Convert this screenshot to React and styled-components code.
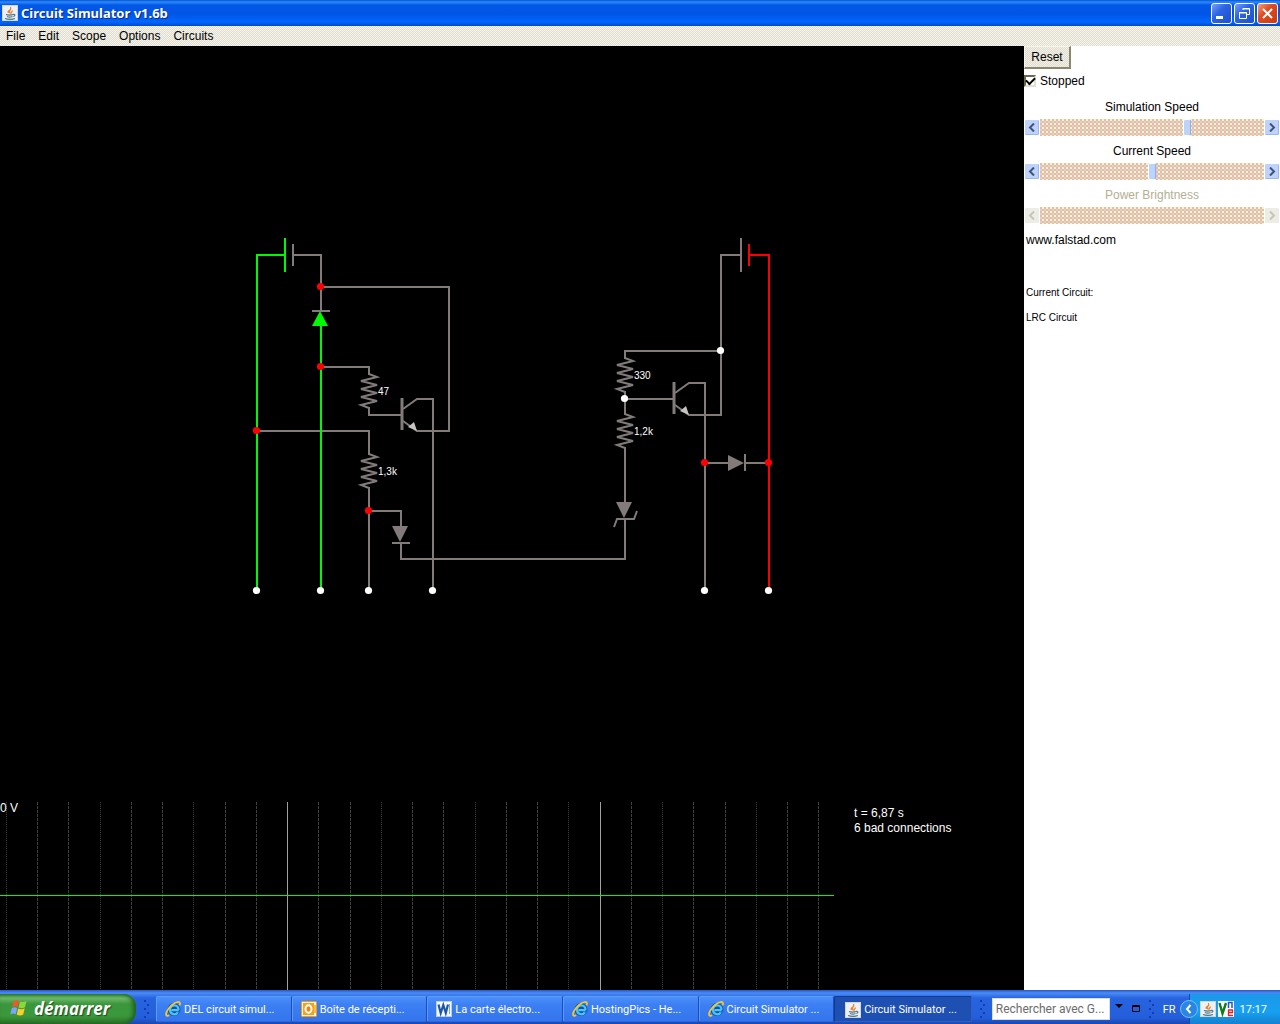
import React, { useState } from 'react'
import styled, { createGlobalStyle, css } from 'styled-components'

const WIRE = '#837a7a'
const GREEN = '#00f800'
const RED = '#ff0000'

const terminals = [256.5, 320.5, 368.5, 432.5, 704.5, 768.5]
const tasks = [
  { icon: 'ie', title: 'DEL circuit simul...' },
  { icon: 'outlook', title: 'Boîte de récepti...' },
  { icon: 'word', title: 'La carte électro...' },
  { icon: 'ie', title: 'HostingPics - He...' },
  { icon: 'ie', title: 'Circuit Simulator ...' },
  { icon: 'java', title: 'Circuit Simulator ...', active: true },
]

/* icons */
function JavaIcon() {
  return (
    <svg width="16" height="16" viewBox="0 0 16 16" aria-hidden="true">
      <rect width="16" height="16" rx="1" fill="#eef0f2" />
      <path d="M.5 15.5V.5h15v15z" fill="none" stroke="#cfd6dc" />
      <path d="M8.500 8.500C5 6 10 5 8.500 2M6.500 8C5 6 8 5.500 9 4M9.500 8.500c-1-1 1-2 1-3" fill="none" stroke="#e8802a" strokeWidth="1.200" />
      <path d="M4 9.500c1.500.7 5.500.7 7 0M5 11.500c1.500.6 4 .6 5.500 0M3 13.500c3 1 7 1 10 0M11 9.500c2.500-.4 2.500 1.500.3 2" fill="none" stroke="#4d7488" strokeWidth="1.200" />
    </svg>
  )
}

function IeIcon() {
  return (
    <svg width="16" height="16" viewBox="0 0 16 16" aria-hidden="true">
      <circle cx="9" cy="8.500" r="6.500" fill="#0c52a8" />
      <path d="M13.500 9.200H6.500M13.500 9.200C14 2.800 5 2.800 5 8.700c0 5.300 6.300 5.800 8 2.300" fill="none" stroke="#4cc4f8" strokeWidth="2.200" />
      <path d="M12.500 10.500h3.500v1.200h-3.500z" fill="#2c74ea" />
      <path d="M4.200 14.300C1.200 16 .2 13.800 2 10.200 4.200 5.700 9.500 1.200 13.200.9c2-.1 2.200 1.600 1.300 3.500" fill="none" stroke="#f7c52e" strokeWidth="1.800" />
    </svg>
  )
}

function OutlookIcon() {
  return (
    <svg width="16" height="16" viewBox="0 0 16 16" aria-hidden="true">
      <rect x=".5" y=".5" width="15" height="15" rx="1" fill="#fff3c4" stroke="#f39a1c" />
      <rect x="2" y="2" width="11" height="12" fill="#f6a11c" />
      <ellipse cx="7.500" cy="8" rx="3" ry="3.800" fill="#e88a10" stroke="#fff" strokeWidth="2" />
      <path d="M13 4h2v8h-2z" fill="#f9bf3d" />
    </svg>
  )
}

function WordIcon() {
  return (
    <svg width="16" height="16" viewBox="0 0 16 16" aria-hidden="true">
      <rect x=".5" y=".5" width="15" height="15" fill="#f4f8fd" stroke="#b9cde8" />
      <path d="M13.500 3v10" stroke="#7fa5d8" />
      <path d="M2.500 3.500 4.700 12 7.300 4l2.500 8L12 3.500" fill="none" stroke="#1d57a8" strokeWidth="2.200" />
    </svg>
  )
}

function WindowsFlag() {
  return (
    <svg width="18" height="18" viewBox="0 0 18 18" aria-hidden="true">
      <path d="M3.500 2.200C5.500.8 7 .9 9 1.900L7.500 8C5.700 7 4 7 2 8.200z" fill="#f0582a" />
      <path d="M10 2.400c2 1 4 1 6.500-.3L15 8.200c-2.300 1.300-4.300 1.200-6.500.2z" fill="#8ed63c" />
      <path d="M1.800 9.200C3.700 8 5.400 8 7.200 9l-1.500 6.200C4 14.200 2.200 14.100.2 15.400z" fill="#7ca4fc" />
      <path d="M8.200 9.400c2 1 4.200 1.100 6.500-.1l-1.500 6.300c-2.200 1.200-4.300 1.100-6.500 0z" fill="#f9cf2b" />
    </svg>
  )
}

const icons = { ie: IeIcon, outlook: OutlookIcon, word: WordIcon, java: JavaIcon }

/* circuit parts, drawn on the simulator grid */
function Resistor({ x, y, label }) {
  const teeth = [3, 7, 11, 15, 19, 23, 27, 31].map((dy, i) => `${x + (i % 2 ? -8 : 8)},${y + dy}`)
  return (
    <g>
      <polyline points={`${x},${y} ${teeth.join(' ')} ${x},${y + 34}`} fill="none" stroke={WIRE} strokeWidth="2" />
      <CircuitText x={x + 9} y={y + 21}>{label}</CircuitText>
    </g>
  )
}

function Transistor({ x, y }) {
  return (
    <g transform={`translate(${x} ${y})`}>
      <path d="M0-16V16" stroke={WIRE} strokeWidth="3" />
      <path d="M1-5 15-15H32M1 7 15 17H32" fill="none" stroke={WIRE} strokeWidth="2" />
      <path d="M15 17 6 13 12 8z" fill="#c4c4c4" />
    </g>
  )
}

function Circuit() {
  return (
    <Schematic viewBox="0 46 1024 756" role="img" aria-label="Circuit">
      <Wire d="M293 255H321V311M321 287H449V431H432M321 367H369V375M369 407V415H402M257 431H369V455M369 487V591M369 511H401V527M401 543V559H625V519M433 398V591" />
      <Wire d="M741 255H721V415H704M721 351H625V359M625 391V415M625 399H674M625 447V503M705 382V591M705 463H728M745 463H769" />
      <Wire d="M293 244V266M741 238V272M312 311H330M392 543H410M745 454V471M614 527 617 519H634L637 511" />
      <Resistor x={369} y={374} label="47" />
      <Resistor x={369} y={454} label="1,3k" />
      <Resistor x={625} y={358} label="330" />
      <Resistor x={625} y={414} label="1,2k" />
      <Transistor x={402} y={414} />
      <Transistor x={674} y={398} />
      <path d="M392 526h16l-8 16zM616 502h16l-8 16zM728 455v16l16-8z" fill={WIRE} />
      <Wire $color={GREEN} d="M285 238V272M285 255H257V591M321 325V591" />
      <path d="M320 311 312 326H328z" fill={GREEN} />
      <Wire $color={RED} d="M749 244V266M749 255H769V591" />
      {[[320.5, 286.5], [320.5, 366.5], [256.5, 430.5], [368.5, 510.5], [704.5, 462.5], [768.5, 462.5]].map(([x, y]) => (
        <circle key={`${x}-${y}`} cx={x} cy={y} r="3.6" fill={RED} />
      ))}
      {[[720.5, 350.5], [624.5, 398.5], ...terminals.map((x) => [x, 590.5])].map(([x, y]) => (
        <circle key={`${x}-${y}`} cx={x} cy={y} r="3.6" fill="#fff" />
      ))}
    </Schematic>
  )
}

function Scope() {
  const lines = Array.from({ length: 27 }, (_, i) => i)
  return (
    <ScopeRow>
      <Plot viewBox="0 0 834 188" preserveAspectRatio="none" role="img" aria-label="Scope">
        {lines.map((i) => {
          const x = Math.floor(6.3 + i * 31.25) + 0.5
          const major = i === 9 || i === 19
          return <path key={i} d={`M${x} 0V188`} stroke={major ? '#a0a0a0' : '#404040'} strokeDasharray={major ? 'none' : i % 3 ? '3 1' : '1 1'} />
        })}
        <path d="M0 93.500H834" stroke="#00f800" />
        <ScopeText x="0" y="10">0 V</ScopeText>
      </Plot>
      <Info>
        <div>t = 6,87 s</div>
        <div>6 bad connections</div>
      </Info>
    </ScopeRow>
  )
}

function Scrollbar({ id, label, start, disabled }) {
  const [value, setValue] = useState(start)
  const step = (n) => setValue(Math.max(0, Math.min(100, value + n)))
  return (
    <Field>
      <FieldLabel htmlFor={id} $disabled={disabled}>{label}</FieldLabel>
      <Bar>
        <Arrow type="button" aria-label={`${label} down`} disabled={disabled} onClick={() => step(-1)}>
          <svg width="8" height="9" viewBox="0 0 8 9"><path d="M6 .5 2 4.500 6 8.500" /></svg>
        </Arrow>
        <Range id={id} type="range" value={value} disabled={disabled} onChange={(e) => setValue(Number(e.target.value))} />
        <Arrow type="button" aria-label={`${label} up`} disabled={disabled} onClick={() => step(1)}>
          <svg width="8" height="9" viewBox="0 0 8 9"><path d="M2 .5 6 4.500 2 8.500" /></svg>
        </Arrow>
      </Bar>
    </Field>
  )
}

function App() {
  const [stopped, setStopped] = useState(true)

  return (
    <Desktop>
      <GlobalStyle />
      {/* title bar */}
      <TitleBar>
        <JavaIcon />
        <Title>Circuit Simulator v1.6b</Title>
        <WindowButton type="button" aria-label="Minimize">
          <svg width="19" height="19" viewBox="0 0 19 19"><path d="M4 13.500h7" strokeWidth="3" /></svg>
        </WindowButton>
        <WindowButton type="button" aria-label="Restore">
          <svg width="19" height="19" viewBox="0 0 19 19"><path d="M4.500 8.500h7v6h-7zM4 9h8M8 6V4.500h6.500v6H12M7.500 5H15" /></svg>
        </WindowButton>
        <WindowButton type="button" aria-label="Close" $close>
          <svg width="19" height="19" viewBox="0 0 19 19"><path d="M5 5 14 14M14 5 5 14" strokeWidth="2" /></svg>
        </WindowButton>
      </TitleBar>

      {/* menu */}
      <MenuBar>
        {['File', 'Edit', 'Scope', 'Options', 'Circuits'].map((name) => (
          <MenuItem type="button" key={name}>{name}</MenuItem>
        ))}
      </MenuBar>

      <Main>
        <Canvas>
          <Circuit />
          <Scope />
        </Canvas>
        {/* controls on the right */}
        <Side>
          <ResetButton type="button">Reset</ResetButton>
          <CheckLabel>
            <input type="checkbox" checked={stopped} onChange={() => setStopped(!stopped)} />
            Stopped
          </CheckLabel>
          <Scrollbar id="speed" label="Simulation Speed" start={66} />
          <Scrollbar id="current" label="Current Speed" start={50} />
          <Scrollbar id="power" label="Power Brightness" start={50} disabled />
          <SideText>www.falstad.com</SideText>
          <SmallText>
            <p>Current Circuit:</p>
            <p>LRC Circuit</p>
          </SmallText>
        </Side>
      </Main>

      {/* taskbar */}
      <Taskbar>
        <StartButton type="button"><WindowsFlag />démarrer</StartButton>
        <Grip />
        <Tasks>
          {tasks.map((task, i) => {
            const Icon = icons[task.icon]
            return <Task type="button" key={i} $active={task.active}><Icon /><span>{task.title}</span></Task>
          })}
        </Tasks>
        <Grip />
        <Search type="text" aria-label="Rechercher" placeholder="Rechercher avec G..." />
        <SearchTools>
          <svg width="26" height="12" viewBox="0 0 26 12" aria-hidden="true">
            <path d="M0 1h8L4 5z" fill="#000" />
            <path d="M17.500 2.500h7v6h-7zM17 3.500h8" fill="none" stroke="#000" />
          </svg>
        </SearchTools>
        <Grip />
        <Language>FR</Language>
        <Tray>
          <TrayArrow type="button" aria-label="Hidden icons">
            <svg width="18" height="18" viewBox="0 0 18 18">
              <circle cx="9" cy="9" r="8.500" fill="#2a86e4" stroke="#79bdf5" />
              <path d="M10.500 5 7 9l3.500 4" fill="none" stroke="#fff" strokeWidth="2" />
            </svg>
          </TrayArrow>
          <JavaIcon />
          <svg width="16" height="16" viewBox="0 0 16 16" aria-hidden="true">
            <path d="M0 0h16v16H0z" fill="#fff" />
            <path d="M1.500 2 4.500 12.500 8 2" fill="none" stroke="#0a7d1c" strokeWidth="2.400" />
            <path d="M10.500 7V1.500H14V7" fill="none" stroke="#1f4fe0" strokeWidth="1.500" />
            <path d="M15 9h-4.500v5.500H15M10 11.500h4.500V9" fill="none" stroke="#e0202a" strokeWidth="1.300" />
          </svg>
          <Clock>17:17</Clock>
        </Tray>
      </Taskbar>
    </Desktop>
  )
}

export default App

const GlobalStyle = createGlobalStyle`
  * {
    box-sizing: border-box;
  }
  body {
    margin: 0;
    background: #000;
    font-family: "Liberation Sans", Arial, sans-serif;
    font-size: 12px;
    color: #000;
  }
  button, input {
    font: inherit;
    color: inherit;
    margin: 0;
  }
  p {
    margin: 0;
  }
`

const Desktop = styled.div`
  display: flex;
  flex-direction: column;
  min-height: 100vh;
`

const TitleBar = styled.header`
  display: flex;
  align-items: center;
  gap: 2px;
  height: 26px;
  padding: 0 2px;
  background: linear-gradient(#0a4fd0 0, #2a8cff 2px, #0458e6 5px, #0055e5 14px, #0066ff 22px, #0048c8 26px);
`

const Title = styled.h1`
  flex: 1;
  margin: 0;
  padding-left: 1px;
  color: #fff;
  font-family: "Noto Sans", sans-serif;
  font-size: 13px;
  line-height: 20px;
  font-weight: 700;
  text-shadow: 1px 1px #0a2a80;
`

const WindowButton = styled.button`
  width: 21px;
  height: 21px;
  padding: 0;
  border: 1px solid #fff;
  border-radius: 3px;
  background: ${({ $close }) => ($close
    ? 'linear-gradient(135deg, #f0a080, #e04a20 40%, #c83c14)'
    : 'linear-gradient(135deg, #7aa0f8, #2c64e4 40%, #1c50d0)')};
  svg {
    display: block;
    fill: none;
    stroke: #fff;
  }
`

const MenuBar = styled.nav`
  display: flex;
  align-items: center;
  gap: 13px;
  height: 20px;
  padding: 0 6px;
  background: repeating-conic-gradient(#dedbd2 0 25%, #f8f6ea 0 50%) 0 0 / 2px 2px;
`

const MenuItem = styled.button`
  padding: 0;
  border: 0;
  background: none;
`

const Main = styled.main`
  flex: 1;
  display: grid;
  grid-template-columns: 4fr 1fr;
`

const Canvas = styled.section`
  display: flex;
  flex-direction: column;
  min-width: 0;
  background: #000;
  color: #fff;
`

const Schematic = styled.svg`
  display: block;
  flex: 1;
  width: 100%;
  min-height: 0;
`

const Wire = styled.path`
  fill: none;
  stroke: ${({ $color }) => $color || WIRE};
  stroke-width: 2;
`

const CircuitText = styled.text`
  fill: #fff;
  font-size: 10px;
`

const ScopeRow = styled.div`
  display: grid;
  grid-template-columns: 834fr 190fr;
  height: 188px;
`

const Plot = styled.svg`
  display: block;
  width: 100%;
  height: 188px;
`

const ScopeText = styled.text`
  fill: #fff;
  font-size: 12px;
`

const Info = styled.div`
  padding: 4px 0 0 20px;
  line-height: 15px;
  white-space: nowrap;
`

const Side = styled.aside`
  display: flex;
  flex-direction: column;
  background: #fff;
`

const ResetButton = styled.button`
  align-self: flex-start;
  min-width: 47px;
  height: 23px;
  padding: 0 6px;
  border: 1px solid;
  border-width: 1px 2px 2px 1px;
  border-color: #f8f6ea #8c8870 #8c8870 #f8f6ea;
  background: repeating-conic-gradient(#dedbd2 0 25%, #f4f0e4 0 50%) 0 0 / 2px 2px;
`

const CheckLabel = styled.label`
  display: flex;
  align-items: center;
  gap: 4px;
  height: 23px;
  margin-bottom: 3px;
  input {
    appearance: none;
    display: grid;
    place-items: center;
    width: 12px;
    height: 12px;
    border: 2px solid;
    border-color: #6c6850 #e4e0d4 #e4e0d4 #6c6850;
    background: #fff;
  }
  input:checked::before {
    content: '';
    width: 7px;
    height: 4px;
    margin-top: -2px;
    border: solid #000;
    border-width: 0 0 2px 2px;
    transform: rotate(-45deg);
  }
`

const Field = styled.div`
  margin-bottom: 3px;
`

const FieldLabel = styled.label`
  display: block;
  line-height: 24px;
  text-align: center;
  color: ${({ $disabled }) => ($disabled ? '#b3af92' : '#000')};
`

const Bar = styled.div`
  display: flex;
  height: 17px;
`

const Arrow = styled.button`
  display: grid;
  place-items: center;
  width: 16px;
  padding: 0;
  border: 1px solid #fff;
  border-radius: 2px;
  background: #bfd2fb;
  box-shadow: inset -1px -1px #9ab8f0;
  svg {
    fill: none;
    stroke: #3f5578;
    stroke-width: 2;
  }
  &:disabled {
    background: #eeede5;
    box-shadow: none;
  }
  &:disabled svg {
    stroke: #c8c6ba;
  }
`

const thumb = css`
  appearance: none;
  width: 8px;
  height: 17px;
  border: 1px solid #fff;
  border-right-color: #8fb0e8;
  border-radius: 2px;
  background: #bcd4fc;
`

const Range = styled.input`
  appearance: none;
  flex: 1;
  min-width: 0;
  height: 17px;
  background:
    linear-gradient(#fffbb8, #fffbb8) 0 0 / 4px 4px,
    #d4c8c0;
  background:
    conic-gradient(#fff4b4 25%, transparent 0) 0 0 / 4px 4px,
    conic-gradient(#ffc4c0 25%, transparent 0) 2px 2px / 4px 4px,
    #cec4bc;
  &::-webkit-slider-thumb {
    ${thumb}
  }
  &:disabled::-webkit-slider-thumb {
    visibility: hidden;
  }
`

const SideText = styled.p`
  padding-left: 2px;
  line-height: 26px;
`

const SmallText = styled.div`
  display: grid;
  gap: 2px;
  padding: 28px 0 0 2px;
  font-size: 10px;
  line-height: 23px;
`

const Taskbar = styled.footer`
  display: flex;
  align-items: flex-end;
  height: 34px;
  background: linear-gradient(#2458cc 0, #4a8cf4 3px, #2864e0 8px, #245edb 28px, #1a46b0 34px);
  color: #fff;
  font-family: Roboto, sans-serif;
  font-size: 11px;
`

const StartButton = styled.button`
  display: flex;
  align-items: center;
  gap: 6px;
  width: 136px;
  height: 30px;
  padding: 0 0 2px 10px;
  border: 0;
  border-radius: 0 12px 12px 0;
  background: linear-gradient(#2f8a2f 0, #6cba6c 4px, #3c963c 10px, #3a983a 22px, #2a7028);
  box-shadow: inset -3px 0 4px #206020;
  color: #fff;
  font-family: "Open Sans", sans-serif;
  font-size: 17px;
  font-style: italic;
  font-weight: 700;
  text-shadow: 1px 1px 1px #1c4a1c;
`

const Grip = styled.span`
  width: 6px;
  height: 20px;
  margin: 0 6px 4px 8px;
  background:
    conic-gradient(from 270deg at 2px 2px, #143cb0 25%, transparent 0) 0 0 / 6px 8px,
    conic-gradient(from 270deg at 2px 2px, #143cb0 25%, transparent 0) 3px 4px / 6px 8px;
`

const Tasks = styled.div`
  flex: 1;
  display: flex;
  min-width: 0;
`

const Task = styled.button`
  flex: 1 1 0;
  display: flex;
  align-items: center;
  gap: 3px;
  min-width: 0;
  height: 26px;
  padding: ${({ $active }) => ($active ? '1px 6px 0 10px' : '0 6px 0 8px')};
  margin-bottom: 2px;
  border: 1px solid;
  border-color: ${({ $active }) => ($active ? '#123a90 #2c60c8 #2c60c8 #123a90' : '#5c9cff #1c4cb8 #2c68e0 #5c9cff')};
  border-radius: 2px;
  background: ${({ $active }) => ($active ? '#1e50b4' : 'linear-gradient(#4c90fc, #3c80f4 30%, #3474ec)')};
  text-align: left;
  span {
    overflow: hidden;
    white-space: nowrap;
  }
  svg {
    flex: none;
  }
`

const Search = styled.input`
  width: 118px;
  height: 22px;
  margin-bottom: 4px;
  padding: 0 3px;
  border: 1px solid #d8dce8;
  background: #fff;
  color: #000;
  font-size: 12px;
  &::placeholder {
    color: #6c6c6c;
    opacity: 1;
  }
`

const SearchTools = styled.span`
  padding: 0 0 6px 5px;
`

const Language = styled.span`
  padding: 0 4px 8px 2px;
`

const Tray = styled.div`
  display: flex;
  align-items: center;
  gap: 2px;
  height: 30px;
  margin-left: 9px;
  padding-right: 13px;
  border-left: 1px solid #0c4cb4;
  background: linear-gradient(#1c98e8, #18a0f0 60%, #1480d0);
`

const TrayArrow = styled.button`
  display: flex;
  margin-left: -10px;
  padding: 0;
  border: 0;
  background: none;
`

const Clock = styled.time`
  padding-left: 4px;
`
